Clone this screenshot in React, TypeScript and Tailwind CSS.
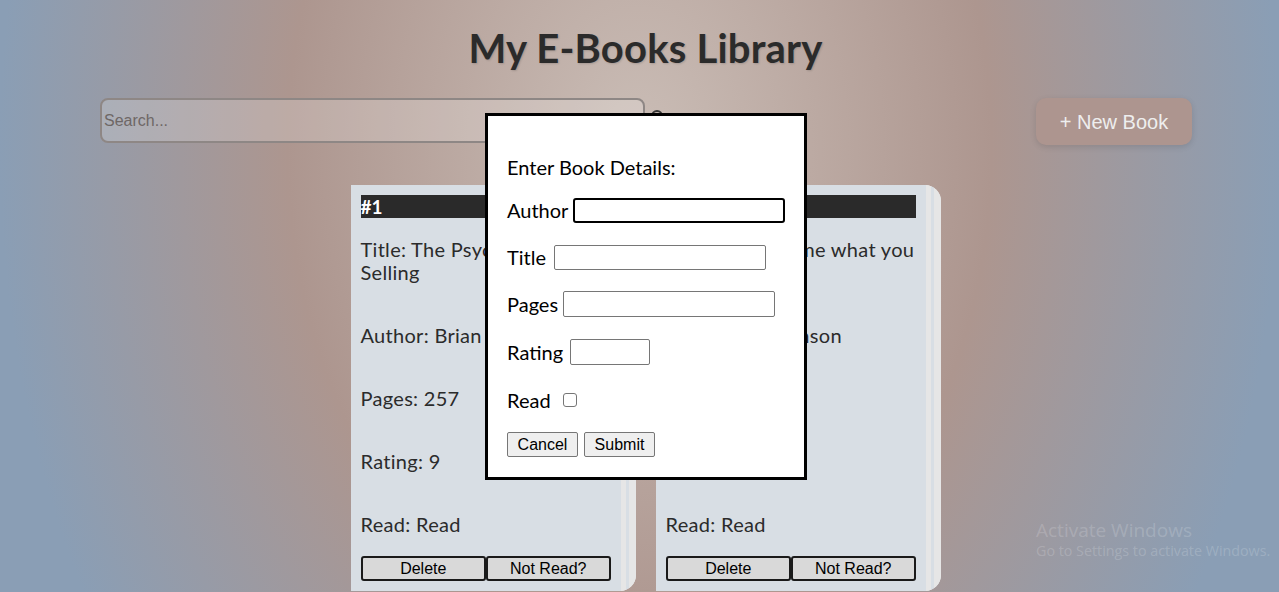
import React from "react";

const font = { fontFamily: "Lato, 'Noto Sans', sans-serif" };

function Card({ num, title1, title2, author, pages, rating }: { num: string; title1: string; title2: string; author: string; pages: string; rating: string }) {
  return (
    <div className="flex rounded-r-[16px] bg-[#e4e4e4] overflow-hidden self-start">
      <div className="w-[270px] bg-[#d8dee4] p-[10px] text-[#2b2b2b] text-[20px] leading-[23px] tracking-[0.3px]">
        <div className="h-[23px] bg-[#2a2a2a] text-white font-bold text-[19px] leading-[23px] tracking-normal">{num}</div>
        <p className="mt-[20px] whitespace-nowrap">{title1}<br />{title2}</p>
        <p className="mt-[40px] whitespace-nowrap">{author}</p>
        <p className="mt-[40px]">{pages}</p>
        <p className="mt-[40px]">{rating}</p>
        <p className="mt-[40px]">Read: Read</p>
        <div className="flex mt-[20px] tracking-normal">
          <button className="w-[126px] h-[25px] bg-[#d9d9d9] border-2 border-[#1a1a1a] rounded-[3px] text-[16px] leading-[20px] text-black" style={{ fontFamily: "'Liberation Sans', Arial, sans-serif" }}>Delete</button>
          <button className="w-[125px] h-[25px] bg-[#d9d9d9] border-2 border-[#1a1a1a] rounded-[3px] text-[16px] leading-[20px] text-black" style={{ fontFamily: "'Liberation Sans', Arial, sans-serif" }}>Not Read?</button>
        </div>
      </div>
      <div className="w-[5px] bg-[#e6e6e6]" />
      <div className="w-[3px] bg-[#d8dee4]" />
      <div className="w-[7px] bg-[#e6e6e6]" />
    </div>
  );
}

export default function App() {
  const arial = { fontFamily: "'Liberation Sans', Arial, sans-serif" };
  return (
    <div
      className="relative w-[1279px] h-[592px] overflow-hidden bg-[radial-gradient(ellipse_640px_900px_at_50%_25%,#cabdb6_0%,#ad968f_55%,#8a9eb5_100%)]"
      style={font}
    >
      <h1 className="pt-[25px] pl-[12px] text-center text-[40px] leading-[46px] font-bold text-[#2b2b2b] tracking-[0.2px] [text-shadow:1px_1px_2px_rgba(0,0,0,0.15)]">
        My E-Books Library
      </h1>

      <div className="flex items-start mt-[27px] pl-[100px]">
        <input
          placeholder="Search..."
          className="w-[545px] h-[45px] rounded-[8px] border-2 border-[#8e8785] bg-[rgba(255,255,255,0.2)] px-[2px] text-[16px] placeholder:text-[#6e6766] outline-none"
          style={arial}
        />
        <div className="ml-[6px] mt-[12px] w-[12px] h-[12px] rounded-full border-2 border-[#333]" />
        <button
          className="ml-auto mr-[87px] w-[156px] h-[47px] rounded-[10px] bg-[#ad958f] text-[20px] text-[#eeeeee] shadow-[0_2px_6px_rgba(0,0,0,0.12)]"
          style={arial}
        >
          + New Book
        </button>
      </div>

      <div className="flex justify-center gap-[20px] pl-[12px] mt-[40px]">
        <Card num="#1" title1="Title: The Psychology of" title2="Selling" author="Author: Brian Tracy" pages="Pages: 257" rating="Rating: 9" />
        <Card num="#2" title1="Title: Now tell me what you" title2="want" author="Author: Bo Manson" pages="Pages: 212" rating="Rating: 8" />
      </div>

      <div className="absolute left-[485px] top-[113px] w-[322px] h-[367px] bg-white border-[3px] border-black text-black text-[20px] leading-[23px]">
        <div className="pl-[19px] pt-[40px] flex flex-col">
          <div>Enter Book Details:</div>
          <div className="flex items-center h-[26px] mt-[18px]">
            <span>Author</span>
            <input className="ml-[5px] w-[212px] h-[25px] border-2 border-black rounded-[3px] outline-none" />
          </div>
          <div className="flex items-center h-[26px] mt-[21px]">
            <span>Title</span>
            <input className="ml-[8px] w-[212px] h-[25px] border border-[#767676] rounded-[2px] outline-none" />
          </div>
          <div className="flex items-center h-[26px] mt-[21px]">
            <span>Pages</span>
            <input className="ml-[5px] w-[212px] h-[26px] border border-[#767676] rounded-[2px] outline-none" />
          </div>
          <div className="flex items-center h-[26px] mt-[22px]">
            <span>Rating</span>
            <input className="ml-[7px] w-[80px] h-[26px] border border-[#767676] rounded-[2px] outline-none" />
          </div>
          <div className="flex items-center h-[26px] mt-[22px]">
            <span>Read</span>
            <span className="ml-[12px] w-[14px] h-[14px] border border-[#767676] rounded-[3px] bg-white" />
          </div>
          <div className="flex gap-[6px] mt-[19px]">
            <button className="w-[71px] h-[25px] bg-[#efefef] border border-[#767676] rounded-[2px] text-[16px] leading-[20px]" style={arial}>Cancel</button>
            <button className="w-[71px] h-[25px] bg-[#efefef] border border-[#767676] rounded-[2px] text-[16px] leading-[20px]" style={arial}>Submit</button>
          </div>
        </div>
      </div>

      <div className="absolute left-[1036px] top-[518px] text-[rgba(255,255,255,0.18)] pointer-events-none" style={{ fontFamily: "'Open Sans', sans-serif" }}>
        <div className="text-[19px] leading-[24px]">Activate Windows</div>
        <div className="text-[14.3px] leading-[18px]">Go to Settings to activate Windows.</div>
      </div>
    </div>
  );
}
